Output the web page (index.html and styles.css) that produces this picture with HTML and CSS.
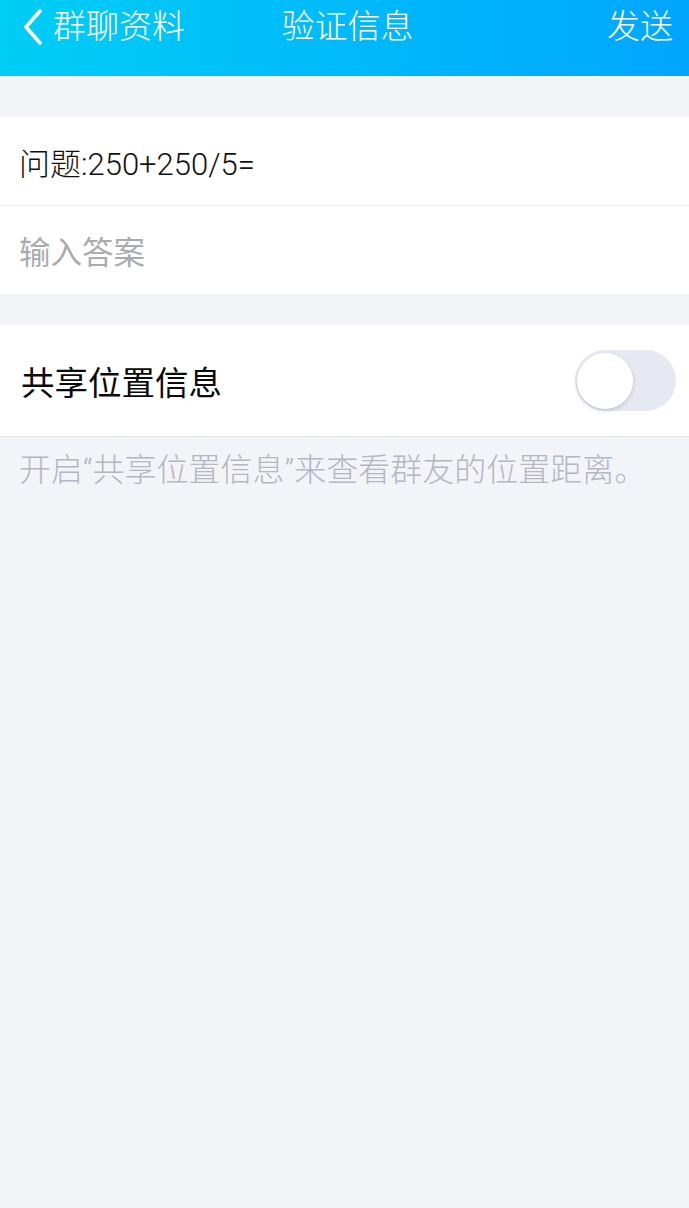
FILE: index.html
```html
<!DOCTYPE html>
<html>
    <head>
        <title>验证信息</title>
        <meta charset="utf-8" />
        <link rel="stylesheet" href="styles.css">
    </head>
    <body>
        <div class="nav-bar">
            <a class="nav-back" href="#">
                <svg class="back-icon" width="22" height="36" viewBox="0 0 22 36">
                    <path d="M18 2 L4 18 L18 34" fill="none" stroke="#fff" stroke-width="3.6" stroke-linecap="round" stroke-linejoin="round"/>
                </svg>
                <span>群聊资料</span>
            </a>
            <div class="nav-title">验证信息</div>
            <a class="nav-send" href="#">发送</a>
        </div>

        <div class="group first-group">
            <div class="cell question">问题:250+250/5=</div>
            <div class="cell answer">
                <input type="text" placeholder="输入答案" />
            </div>
        </div>

        <div class="group second-group">
            <div class="cell switch-row">
                <span class="switch-label">共享位置信息</span>
                <span class="switch"><span class="knob"></span></span>
            </div>
        </div>
        <p class="hint">开启<span class="quote">“</span>共享位置信息<span class="quote">”</span>来查看群友的位置距离。</p>
    </body>
</html>
```

FILE: styles.css
```css
body {
    margin: 0;
    padding: 0;
    background-color: #F3F4F8;
    font-family: "Noto Sans CJK SC", "Noto Sans", sans-serif;
    width: 689px;
    min-height: 1208px;
}

.nav-bar {
    height: 76px;
    background: linear-gradient(90deg, #00CEF6 0%, #00BAFA 50%, #00A6FE 100%);
    display: grid;
    grid-template-columns: 1fr auto 1fr;
    align-items: start;
    padding: 0 16px 0 22px;
    color: #FFF;
}

.nav-back,
.nav-send,
.nav-title {
    color: #FFF;
    text-decoration: none;
    font-size: 33px;
    line-height: 48px;
    font-weight: 300;
}

.nav-back {
    display: flex;
    align-items: center;
}

.back-icon {
    margin-right: 9px;
    margin-top: 6px;
}

.nav-send {
    text-align: right;
}

.group {
    background-color: #FFF;
}

.first-group {
    margin-top: 41px;
}

.second-group {
    margin-top: 31px;
    border-bottom: 1px solid #E3E5EB;
}

.cell {
    height: 88px;
    display: flex;
    align-items: center;
    padding-left: 19px;
    box-sizing: border-box;
}

.question {
    font-family: "Roboto", "Noto Sans CJK SC", sans-serif;
    font-size: 31px;
    font-weight: 300;
    color: #111;
    border-bottom: 1px solid #EFF0F3;
    height: 89px;
}

.answer input {
    border: none;
    outline: none;
    width: 600px;
    padding: 0;
    font-family: inherit;
    font-size: 31.5px;
    color: #111;
    background: transparent;
}

.answer input::placeholder {
    color: #A9ABB0;
}

.switch-row {
    height: 111px;
    justify-content: space-between;
    padding-left: 21px;
    padding-right: 13px;
}

.switch-label {
    font-size: 33.5px;
    color: #0A0A0A;
}

.switch {
    width: 101px;
    height: 61px;
    border-radius: 31px;
    background-color: #E7E9F2;
    display: flex;
    align-items: center;
    padding-left: 2px;
    box-sizing: border-box;
}

.knob {
    width: 56px;
    height: 56px;
    border-radius: 50%;
    background-color: #FFF;
    box-shadow: 0 2px 4px rgba(80, 90, 120, 0.25);
}

.hint {
    margin: 8px 0 0 19px;
    font-size: 32px;
    line-height: 44px;
    color: #B4B7C2;
    font-weight: 300;
}

.hint .quote {
    font-family: "Roboto", sans-serif;
}
```
